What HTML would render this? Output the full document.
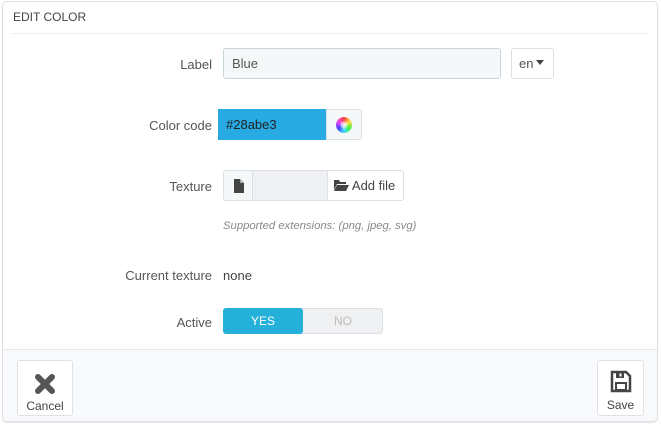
<!DOCTYPE html>
<html><head><style>
*{box-sizing:border-box;margin:0;padding:0}
body{width:661px;height:425px;background:#fff;font-family:"Liberation Sans",sans-serif;font-size:13px;color:#555;position:relative;overflow:hidden}
.panel{position:absolute;left:2px;top:1px;width:656px;height:421px;border:1px solid #dcdfe3;border-radius:5px;box-shadow:0 1px 1px #e6e6e6;overflow:hidden}
.hd{position:absolute;left:8px;top:0;right:8px;height:32px;border-bottom:1px solid #eee;font-size:12px;color:#444;line-height:31px;padding-left:2px}
.ab{position:absolute}
.lbl{position:absolute;right:445px;font-size:13px;color:#555;text-align:right;white-space:nowrap}
.ft{position:absolute;left:0;right:0;top:347px;bottom:0;background:#f8fafc;border-top:1px solid #e4e8ec}
.btn{position:absolute;background:#fff;border:1px solid #dfe3e7;border-radius:3px;text-align:center;font-size:12px;color:#444}
</style></head><body>
<div class="panel">
<div class="hd">EDIT COLOR</div>
<div class="lbl" style="top:55px">Label</div>
<div class="ab" style="left:220px;top:46px;width:278px;height:31px;background:#f5f8f9;border:1px solid #c7d6db;border-radius:3px;padding:7px 8px;color:#555">Blue</div>
<div class="ab" style="left:508px;top:46px;width:43px;height:31px;border:1px solid #dcdfe3;border-radius:3px;padding:7px 7px;color:#555">en<span style="display:inline-block;margin-left:3px;vertical-align:3px;border-left:4px solid transparent;border-right:4px solid transparent;border-top:5px solid #444"></span></div>

<div class="lbl" style="top:116px">Color code</div>
<div class="ab" style="left:215px;top:107px;width:108px;height:31px;background:#28abe3;padding:8px 8px;color:#222">#28abe3</div>
<div class="ab" style="left:323px;top:107px;width:36px;height:31px;background:#f5f8f9;border:1px solid #dcdfe3;border-radius:0 3px 3px 0"><div style="position:absolute;left:9px;top:7px;width:16px;height:16px;border-radius:50%;background:conic-gradient(#f44,#fd4,#4e4,#4df,#44f,#e4e,#f44)"></div><div style="position:absolute;left:13px;top:11px;width:8px;height:8px;border-radius:50%;background:radial-gradient(#fff,rgba(255,255,255,0))"></div></div>

<div class="lbl" style="top:177px">Texture</div>
<div class="ab" style="left:220px;top:168px;width:181px;height:31px;border:1px solid #dcdfe3;border-radius:3px;background:#fff"></div>
<div class="ab" style="left:221px;top:169px;width:29px;height:29px;background:#f5f8f9;border-right:1px solid #dcdfe3"><svg width="29" height="29"><path d="M10 8h6l4 4v10h-10z" fill="#444"/><path d="M16 8v4h4" fill="#aaa"/></svg></div>
<div class="ab" style="left:250px;top:169px;width:75px;height:29px;background:#eef0f1;border-right:1px solid #dcdfe3"></div>
<div class="ab" style="left:331px;top:176px;color:#444"><svg width="15" height="12" style="vertical-align:-1px"><path d="M0 1h5l1 2h6v2H3L0 11z" fill="#444"/><path d="M3 6h12l-3 6H0z" fill="#444"/></svg> Add file</div>
<div class="ab" style="left:220px;top:218px;font-style:italic;color:#888;font-size:11.3px">Supported extensions: (png, jpeg, svg)</div>

<div class="lbl" style="top:266px">Current texture</div>
<div class="ab" style="left:220px;top:266px;color:#444">none</div>

<div class="lbl" style="top:313px">Active</div>
<div class="ab" style="left:220px;top:306px;width:160px;height:26px;background:#eef0f1;border:1px solid #dcdfe3;border-radius:3px"></div>
<div class="ab" style="left:220px;top:306px;width:80px;height:26px;background:#25b0d9;border-radius:3px;color:#fff;text-align:center;line-height:26px;font-size:12px">YES</div>
<div class="ab" style="left:300px;top:306px;width:80px;height:26px;color:#bbb;text-align:center;line-height:26px;font-size:12px">NO</div>

<div class="ft"></div>
<div class="btn" style="left:14px;top:358px;width:56px;height:56px"><svg width="22" height="22" style="margin-top:12px"><path d="M4 4L18 18M18 4L4 18" stroke="#555" stroke-width="6" stroke-linecap="round"/></svg><div style="margin-top:1px">Cancel</div></div>
<div class="btn" style="left:594px;top:358px;width:47px;height:56px"><svg width="22" height="24" style="margin-top:9px"><path d="M2 2h14l4 4v15H2z" fill="none" stroke="#444" stroke-width="2.5"/><rect x="6" y="3" width="8" height="5" fill="#444"/><rect x="9.5" y="3.5" width="2" height="3" fill="#fff"/><rect x="6" y="13" width="10" height="7" fill="none" stroke="#444" stroke-width="2"/></svg><div style="margin-top:1px">Save</div></div>
</div>
</body></html>
